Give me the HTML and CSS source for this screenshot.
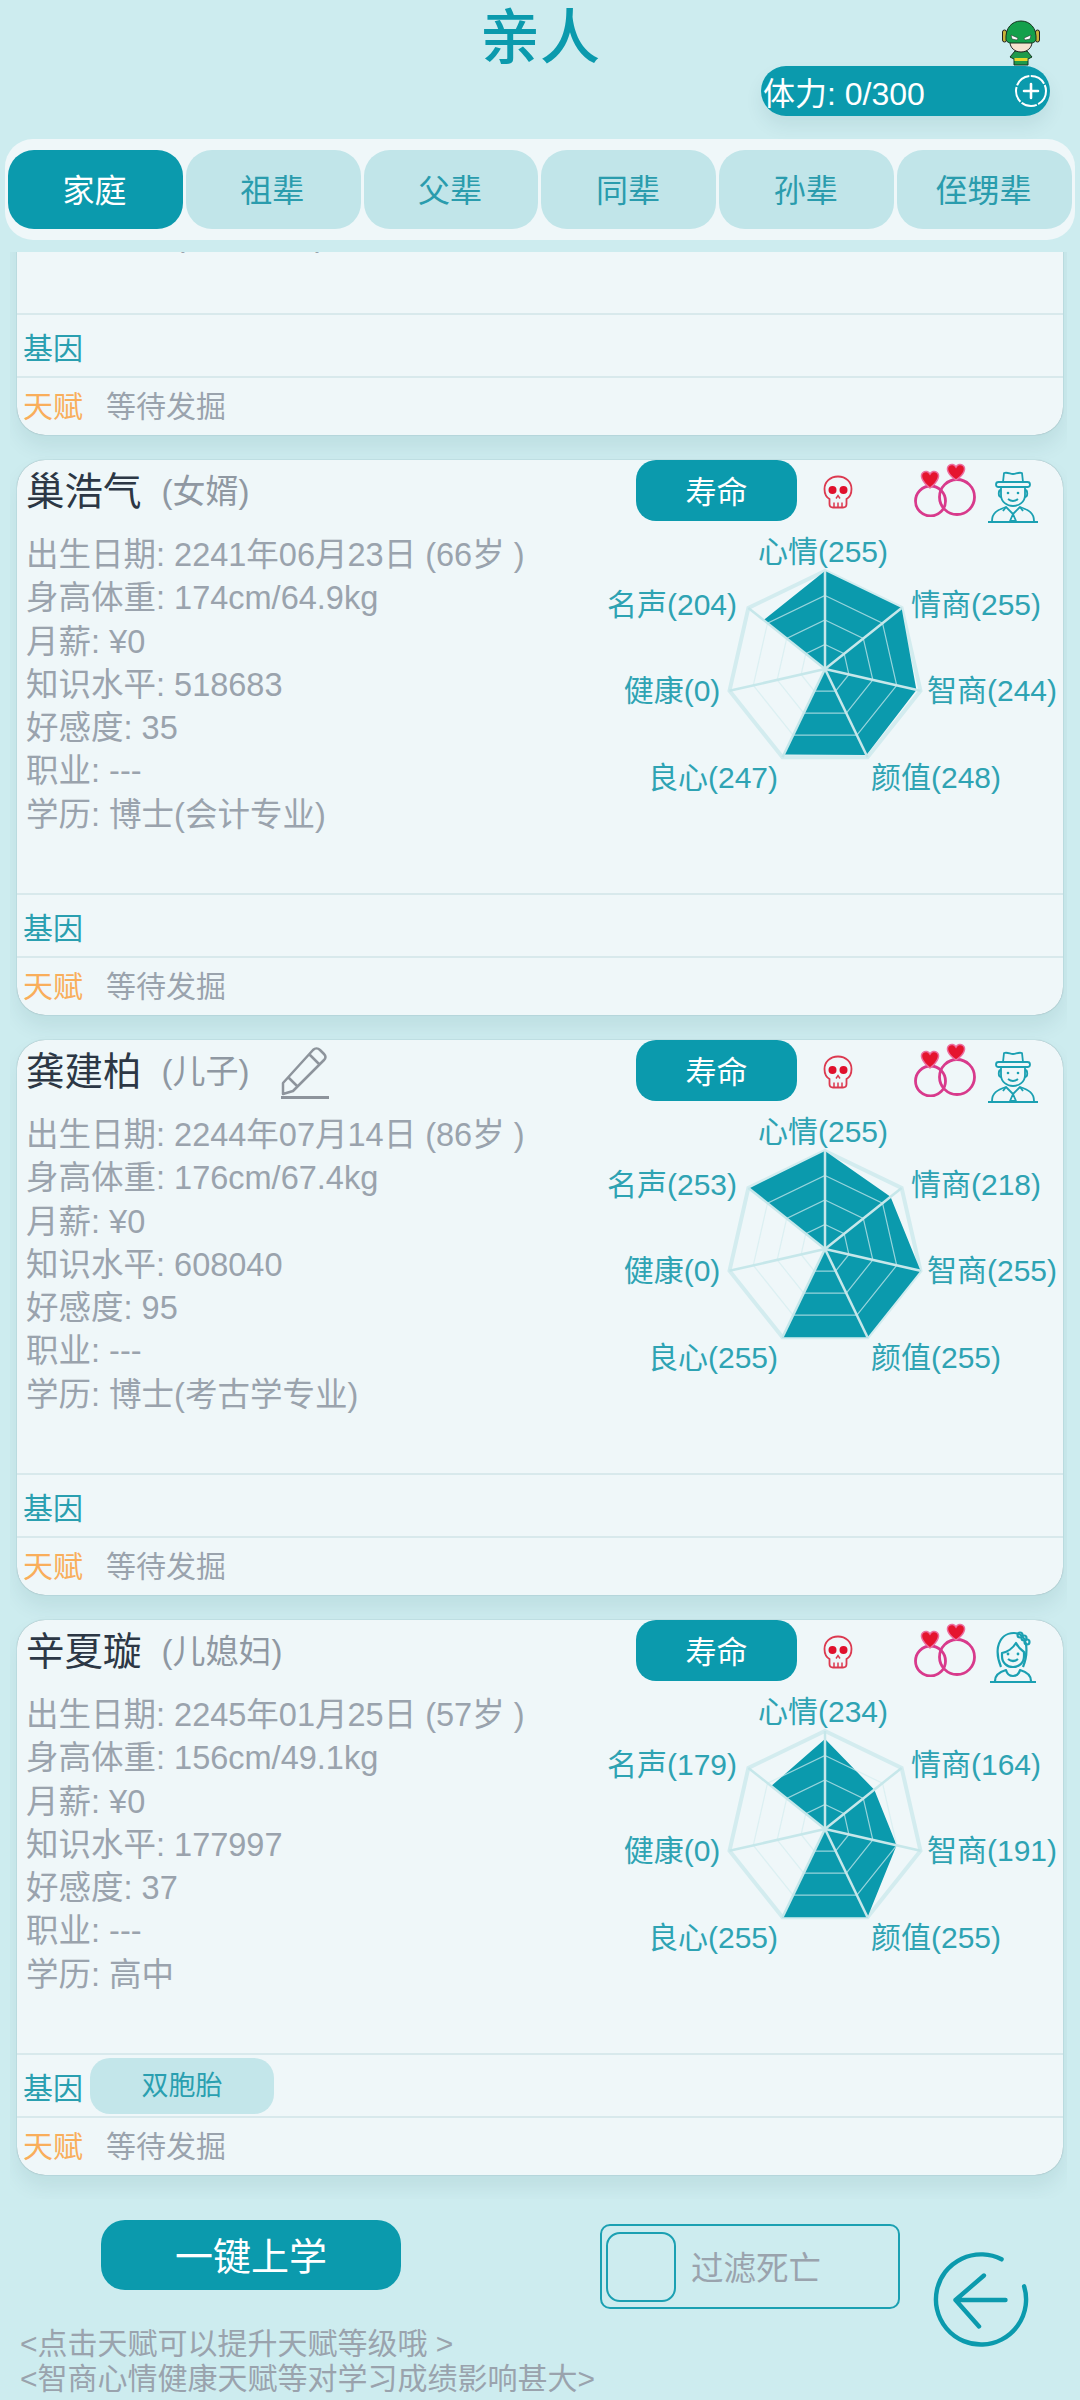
FILE: index.html
```html
<!DOCTYPE html>
<html>
<head>
    <meta charset="UTF-8">
    <title>亲人</title>
    <link rel="stylesheet" href="styles.css">
</head>
<body>
    <!-- Shared icons -->
    <svg class="icon-defs" width="0" height="0">
        <symbol id="icon-skull" viewBox="0 0 30 34">
            <path d="M15 1.500C7 1.500 1.500 7 1.500 14c0 4.500 1.500 8 5 10v5c0 2 1.500 3.500 3.500 3.500h10c2 0 3.500-1.500 3.500-3.500v-5c3.500-2 5-5.500 5-10C28.500 7 23 1.500 15 1.500z" fill="none" stroke="#dc3a50" stroke-width="1.800"/>
            <circle cx="9.500" cy="15" r="4" fill="#e0102c"/>
            <circle cx="20.500" cy="15" r="4" fill="#e0102c"/>
            <path d="M13 23.500l2-3 2 3M11 27.500v5M15 27.500v5M19 27.500v5" fill="none" stroke="#dc3a50" stroke-width="1.500"/>
        </symbol>
        <symbol id="icon-rings" viewBox="0 0 63 54">
            <circle cx="17.500" cy="38" r="15" fill="none" stroke="#d83a8c" stroke-width="2.800"/>
            <circle cx="44" cy="34" r="17.500" fill="none" stroke="#d83a8c" stroke-width="2.800"/>
            <path d="M17 25C8 18 7 12 10 9.500c2.500-2 5.500-1 7 1.500 1.500-2.500 4.500-3.500 7-1.500 3 2.500 2 8.500-7 15.500z" fill="#e5142e" stroke="#ec6fa0" stroke-width="1.500"/>
            <path d="M43 17C34 11 33 5 36 2.500c2.500-2 5.500-1 7 1.500 1.500-2.500 4.500-3.500 7-1.500 3 2.500 2 8.500-7 14.500z" fill="#e5142e" stroke="#ec6fa0" stroke-width="1.500"/>
        </symbol>
        <symbol id="icon-man" viewBox="0 0 50 53">
            <g fill="none" stroke="#1ba0b2" stroke-width="1.800" stroke-linejoin="round">
                <path d="M0 52h50"/>
                <path d="M4 51c0-8 5-11 14-14l7 7 7-7c9 3 14 6 14 14"/>
                <path d="M25 44l-3 7h6zM18 37l-3 4M32 37l3 4"/>
                <path d="M13 18v7c0 7 6 11 12 11s12-4 12-11v-7"/>
                <path d="M13 20c-3 0-3 7 0 7M37 20c3 0 3 7 0 7"/>
                <path d="M15 12l1-9c4-1 6 1 9 1s5-2 9-1l1 9"/>
                <rect x="8" y="12" width="34" height="5" rx="2.500"/>
                <path d="M20 29q5 4 10 0"/>
            </g>
            <circle cx="20" cy="23" r="1.300" fill="#1ba0b2"/>
            <circle cx="30" cy="23" r="1.300" fill="#1ba0b2"/>
        </symbol>
        <symbol id="icon-woman" viewBox="0 0 50 53">
            <g fill="none" stroke="#1ba0b2" stroke-width="2.200" stroke-linejoin="round">
                <path d="M2 52h46"/>
                <path d="M7 51c0-6 4-9 11-11 1 4 4 6 7 6s6-2 7-6c7 2 11 5 11 11"/>
                <path d="M13 37c-3-7-4-14-3-20C12 8 18 3 26 3c7 0 11 5 12 11 1 7 0 16-3 23"/>
                <path d="M14 23c5-1 11-5 14-10 2 4 5 7 8 9v4c0 7-5 11-11 11s-11-4-11-11z"/>
                <path d="M20 29q5 4 10 0"/>
                <circle cx="32" cy="5" r="2.500"/>
                <circle cx="36" cy="8" r="2.500"/>
                <circle cx="39" cy="12" r="2.500"/>
            </g>
            <circle cx="20" cy="24" r="1.400" fill="#1ba0b2"/>
            <circle cx="30" cy="24" r="1.400" fill="#1ba0b2"/>
        </symbol>
    </svg>

    <header class="top-bar">
        <h1 class="page-title">亲人</h1>
        <div class="stamina">
            <svg class="hero" viewBox="0 0 38 46" width="38" height="46">
                <rect x="0.500" y="10" width="4" height="12" rx="2" fill="#c8b23a" stroke="#222" stroke-width="1"/>
                <rect x="33.500" y="10" width="4" height="12" rx="2" fill="#c8b23a" stroke="#222" stroke-width="1"/>
                <path d="M13 31h12l5 6-4 2v6H12v-6l-4-2z" fill="#1f9a4b" stroke="#17351f" stroke-width="1"/>
                <rect x="12.500" y="38" width="13" height="3" fill="#e8d52a"/>
                <path d="M8 22c0 6 5 10 11 10s11-4 11-10z" fill="#f6e3d0" stroke="#222" stroke-width="1"/>
                <path d="M4 20C3 8 10 1 19 1s16 7 15 19c-1 2-3 3-5 3H9c-2 0-4-1-5-3z" fill="#14a04c" stroke="#17351f" stroke-width="1"/>
                <path d="M9 15l7 3-1 2-5-1zM29 15l-7 3 1 2 5-1z" fill="#fff" stroke="#222" stroke-width=".500"/>
            </svg>
            <span class="stamina-text">体力: 0/300</span>
            <svg class="stamina-add" viewBox="0 0 34 34" width="34" height="34">
                <circle cx="17" cy="17" r="15" fill="none" stroke="#fff" stroke-width="2" stroke-dasharray="16 1.500"/>
                <path d="M10 17h14M17 10v14" stroke="#fff" stroke-width="2.600" stroke-linecap="round"/>
            </svg>
        </div>
    </header>

    <nav class="tabs">
        <button type="button" class="tab-btn active">家庭</button>
        <button type="button" class="tab-btn">祖辈</button>
        <button type="button" class="tab-btn">父辈</button>
        <button type="button" class="tab-btn">同辈</button>
        <button type="button" class="tab-btn">孙辈</button>
        <button type="button" class="tab-btn">侄甥辈</button>
    </nav>

    <main class="family-list">
        <!-- Scrolled most of the way out of view -->
        <section class="card card-scrolled">
            <div class="card-body">
                <div class="info info-scrolled">
                    <p>学历: 博士(医学专业)</p>
                </div>
            </div>
            <div class="card-row"><span class="gene-label">基因</span></div>
            <div class="card-row"><span class="talent-label">天赋</span><span class="talent-value">等待发掘</span></div>
        </section>

        <section class="card">
            <div class="card-body">
                <div class="info">
                    <div class="name-row"><span class="name">巢浩气</span><span class="relation">(女婿)</span></div>
                    <p>出生日期: 2241年06月23日 (66岁 )</p>
                    <p>身高体重: 174cm/64.9kg</p>
                    <p>月薪: ¥0</p>
                    <p>知识水平: 518683</p>
                    <p>好感度: 35</p>
                    <p>职业: ---</p>
                    <p>学历: 博士(会计专业)</p>
                </div>
                <div class="side">
                    <div class="actions">
                        <button type="button" class="life-btn">寿命</button>
                        <svg class="icon-skull"><use href="#icon-skull"/></svg>
                        <svg class="icon-rings"><use href="#icon-rings"/></svg>
                        <svg class="icon-person"><use href="#icon-man"/></svg>
                    </div>
                    <svg class="radar" viewBox="0 0 463 270" data-values="255,255,244,248,247,0,204"></svg>
                </div>
            </div>
            <div class="card-row"><span class="gene-label">基因</span></div>
            <div class="card-row"><span class="talent-label">天赋</span><span class="talent-value">等待发掘</span></div>
        </section>

        <section class="card">
            <div class="card-body">
                <div class="info">
                    <div class="name-row">
                        <span class="name">龚建柏</span><span class="relation">(儿子)</span>
                        <svg class="icon-pencil" viewBox="0 0 48 54" width="48" height="54">
                            <path d="M2 38L32 5c2-2 5-2 7 0l4 4c2 2 2 4 0 6L12 46l-10 3zM28 9l11 11M8 33l9 9" fill="none" stroke="#8d949c" stroke-width="2.500" stroke-linejoin="round"/>
                            <path d="M0 52.500h48" stroke="#8d949c" stroke-width="3"/>
                        </svg>
                    </div>
                    <p>出生日期: 2244年07月14日 (86岁 )</p>
                    <p>身高体重: 176cm/67.4kg</p>
                    <p>月薪: ¥0</p>
                    <p>知识水平: 608040</p>
                    <p>好感度: 95</p>
                    <p>职业: ---</p>
                    <p>学历: 博士(考古学专业)</p>
                </div>
                <div class="side">
                    <div class="actions">
                        <button type="button" class="life-btn">寿命</button>
                        <svg class="icon-skull"><use href="#icon-skull"/></svg>
                        <svg class="icon-rings"><use href="#icon-rings"/></svg>
                        <svg class="icon-person"><use href="#icon-man"/></svg>
                    </div>
                    <svg class="radar" viewBox="0 0 463 270" data-values="255,218,255,255,255,0,253"></svg>
                </div>
            </div>
            <div class="card-row"><span class="gene-label">基因</span></div>
            <div class="card-row"><span class="talent-label">天赋</span><span class="talent-value">等待发掘</span></div>
        </section>

        <section class="card">
            <div class="card-body">
                <div class="info">
                    <div class="name-row"><span class="name">辛夏璇</span><span class="relation">(儿媳妇)</span></div>
                    <p>出生日期: 2245年01月25日 (57岁 )</p>
                    <p>身高体重: 156cm/49.1kg</p>
                    <p>月薪: ¥0</p>
                    <p>知识水平: 177997</p>
                    <p>好感度: 37</p>
                    <p>职业: ---</p>
                    <p>学历: 高中</p>
                </div>
                <div class="side">
                    <div class="actions">
                        <button type="button" class="life-btn">寿命</button>
                        <svg class="icon-skull"><use href="#icon-skull"/></svg>
                        <svg class="icon-rings"><use href="#icon-rings"/></svg>
                        <svg class="icon-person"><use href="#icon-woman"/></svg>
                    </div>
                    <svg class="radar" viewBox="0 0 463 270" data-values="234,164,191,255,255,0,179"></svg>
                </div>
            </div>
            <div class="card-row"><span class="gene-label">基因</span><span class="gene-chip">双胞胎</span></div>
            <div class="card-row"><span class="talent-label">天赋</span><span class="talent-value">等待发掘</span></div>
        </section>
    </main>

    <footer class="bottom-bar">
        <div class="bottom-left">
            <button type="button" class="school-btn">一键上学</button>
            <p class="hint">&lt;点击天赋可以提升天赋等级哦 &gt;<br>&lt;智商心情健康天赋等对学习成绩影响甚大&gt;</p>
        </div>
        <div class="filter">
            <span class="filter-box"></span>
            <span class="filter-text">过滤死亡</span>
        </div>
        <svg class="back-btn" viewBox="0 0 100 100" width="98" height="98">
            <path d="M71 8.500A46 46 0 1 0 94 36" fill="none" stroke="#0b9aad" stroke-width="4.500" stroke-linecap="round"/>
            <path d="M75 50H24M53 25L24 50l24 27" fill="none" stroke="#0b9aad" stroke-width="4.500" stroke-linecap="round" stroke-linejoin="round"/>
        </svg>
    </footer>

    <script>
        // Radar charts: seven stats, clockwise from the top
        const NS = 'http://www.w3.org/2000/svg';
        const CX = 225, CY = 139, R = 98;
        const labels = [
            ['心情', 223, 21], ['情商', 376, 74], ['智商', 392, 160], ['颜值', 336, 247],
            ['良心', 113, 247], ['健康', 72, 160], ['名声', 72, 74]
        ];

        function vertex(i, r) {
            const a = i * 2 * Math.PI / 7;
            return (CX + r * Math.sin(a)).toFixed(1) + ',' + (CY - r * Math.cos(a)).toFixed(1);
        }

        function add(svg, tag, attrs, text) {
            const el = document.createElementNS(NS, tag);
            Object.keys(attrs).forEach(k => el.setAttribute(k, attrs[k]));
            if (text) el.textContent = text;
            svg.appendChild(el);
        }

        document.querySelectorAll('.radar').forEach(svg => {
            const values = svg.dataset.values.split(',').map(Number);
            add(svg, 'polygon', { points: values.map((v, i) => vertex(i, R)).join(' '), class: 'radar-edge' });

            const shape = values.map((v, i) => vertex(i, R * v / 255)).join(' ');
            add(svg, 'polygon', { points: shape, class: 'radar-shape' });

            [0.25, 0.5, 0.75].forEach(k => {
                const ring = values.map((v, i) => vertex(i, R * k)).join(' ');
                add(svg, 'polygon', { points: ring, class: 'radar-ring' });
            });

            values.forEach((v, i) => {
                const end = vertex(i, R).split(',');
                add(svg, 'line', { x1: CX, y1: CY, x2: end[0], y2: end[1], class: 'radar-spoke' });
                add(svg, 'text', { x: labels[i][1], y: labels[i][2], class: 'radar-label' }, labels[i][0] + '(' + v + ')');
            });
        });
    </script>
</body>
</html>
```

FILE: styles.css
```css
* {
    box-sizing: border-box;
}

html, body {
    margin: 0;
    padding: 0;
}

body {
    width: 1080px;
    height: 2400px;
    overflow: hidden;
    background-color: #cdecef;
    font-family: "Liberation Sans", "Noto Sans CJK SC", sans-serif;
    color: #9aa3ad;
}

button {
    font-family: inherit;
    border: none;
    padding: 0;
}

p {
    margin: 0;
}

.icon-defs {
    position: absolute;
}

/* Header */
.top-bar {
    height: 139px;
    padding-top: 1px;
}

.page-title {
    margin: 0;
    height: 65px;
    line-height: 75px;
    font-size: 60px;
    font-weight: 500;
    text-align: center;
    color: #0b9aad;
}

.stamina {
    position: relative;
    display: flex;
    align-items: center;
    justify-content: space-between;
    width: 289px;
    height: 50px;
    margin-left: 761px;
    padding: 0 2px 0 2px;
    border-radius: 25px;
    background-color: #0b9aad;
    box-shadow: 0 10px 18px rgba(0, 70, 80, 0.08);
}

.stamina-text {
    font-size: 32px;
    color: #fff;
}

.hero {
    position: absolute;
    top: -46px;
    left: 241px;
}

/* Tabs */
.tabs {
    display: flex;
    gap: 3px;
    width: 1070px;
    height: 101px;
    margin: 0 5px;
    padding: 11px 3px;
    border-radius: 28px;
    background-color: #eff7f9;
}

.tab-btn {
    flex: 1;
    padding: 0 2px 3px 0;
    border-radius: 26px;
    font-size: 32px;
    color: #2a9cad;
    background-color: #c1e5e9;
}

.tab-btn.active {
    color: #fff;
    background-color: #0b9aad;
}

/* Cards */
.family-list {
    width: 1057px;
    height: 1947px;
    margin: 12px 0 0 10px;
    padding: 0 4px 0 7px;
    overflow: hidden;
}

.card {
    height: 555px;
    margin-bottom: 25px;
    border-radius: 28px;
    background-color: #eff7f9;
    box-shadow: 0 0 1px rgba(0, 50, 60, 0.5), 0 12px 20px rgba(0, 70, 80, 0.08);
}

.card-scrolled {
    margin-top: -372px;
}

.card-body {
    display: flex;
    height: 433px;
}

.info {
    width: 583px;
    padding-left: 9px;
    font-size: 32.5px;
    line-height: 43.3px;
}

.info-scrolled {
    padding-top: 334px;
}

.name-row {
    display: flex;
    align-items: center;
    height: 64px;
    margin-bottom: 10px;
}

.name {
    font-size: 38.5px;
    color: #2c3745;
}

.relation {
    margin-left: 20px;
    font-size: 33px;
    color: #8f98a2;
}

.icon-pencil {
    margin-left: 31px;
}

.side {
    flex: 1;
}

.actions {
    display: flex;
    align-items: flex-start;
    height: 70px;
    padding-left: 36px;
}

.life-btn {
    width: 161px;
    height: 61px;
    padding-bottom: 3px;
    border-radius: 20px;
    font-size: 31px;
    color: #fff;
    background-color: #0b9aad;
}

.icon-skull {
    width: 30px;
    height: 34px;
    margin: 15px 0 0 26px;
}

.icon-rings {
    width: 63px;
    height: 54px;
    margin: 3px 0 0 60px;
}

.icon-person {
    width: 50px;
    height: 53px;
    margin: 10px 0 0 12px;
}

.radar {
    display: block;
    width: 463px;
    height: 270px;
}

.radar-shape {
    fill: #0b9aad;
}

.radar-ring {
    fill: none;
    stroke: #d3ecef;
    stroke-width: 1.2;
    opacity: 0.7;
}

.radar-edge {
    fill: none;
    stroke: #d3ecef;
    stroke-width: 4;
}

.radar-spoke {
    stroke: #c6e7ea;
    stroke-width: 2.5;
}

.radar-label {
    font-size: 30px;
    fill: #2ea3b3;
    text-anchor: middle;
    dominant-baseline: central;
}

.card-row {
    display: flex;
    align-items: center;
    height: 63px;
    padding-left: 6px;
    border-top: 2px solid #d8e9ec;
    font-size: 30px;
}

.card-row:last-child {
    height: 59px;
    padding-bottom: 5px;
}

.gene-label {
    color: #2a9fb0;
}

.gene-chip {
    width: 184px;
    height: 56px;
    margin-left: 7px;
    border-radius: 20px;
    font-size: 27px;
    line-height: 56px;
    text-align: center;
    color: #2a9fb0;
    background-color: #c3e6ea;
}

.talent-label {
    color: #f9ae5b;
}

.talent-value {
    margin-left: 23px;
    color: #9aa3ad;
}

/* Footer */
.bottom-bar {
    display: flex;
    align-items: flex-start;
    height: 201px;
}

.bottom-left {
    width: 600px;
    padding: 21px 0 0 20px;
}

.school-btn {
    display: block;
    width: 300px;
    height: 70px;
    margin-left: 81px;
    padding-bottom: 3px;
    border-radius: 24px;
    font-size: 38px;
    color: #fff;
    background-color: #0b9aad;
}

.hint {
    margin-top: 36px;
    font-size: 30px;
    line-height: 35px;
    white-space: nowrap;
}

.filter {
    display: flex;
    align-items: center;
    width: 300px;
    height: 85px;
    margin-top: 25px;
    padding-left: 4px;
    border: 2px solid #1ba0b2;
    border-radius: 10px;
}

.filter-box {
    width: 70px;
    height: 70px;
    border: 2.500px solid #1ba0b2;
    border-radius: 14px;
}

.filter-text {
    margin: 0 0 3px 15px;
    font-size: 32.500px;
    color: #9aa3ad;
}

.back-btn {
    margin: 52px 0 0 32px;
}
```
